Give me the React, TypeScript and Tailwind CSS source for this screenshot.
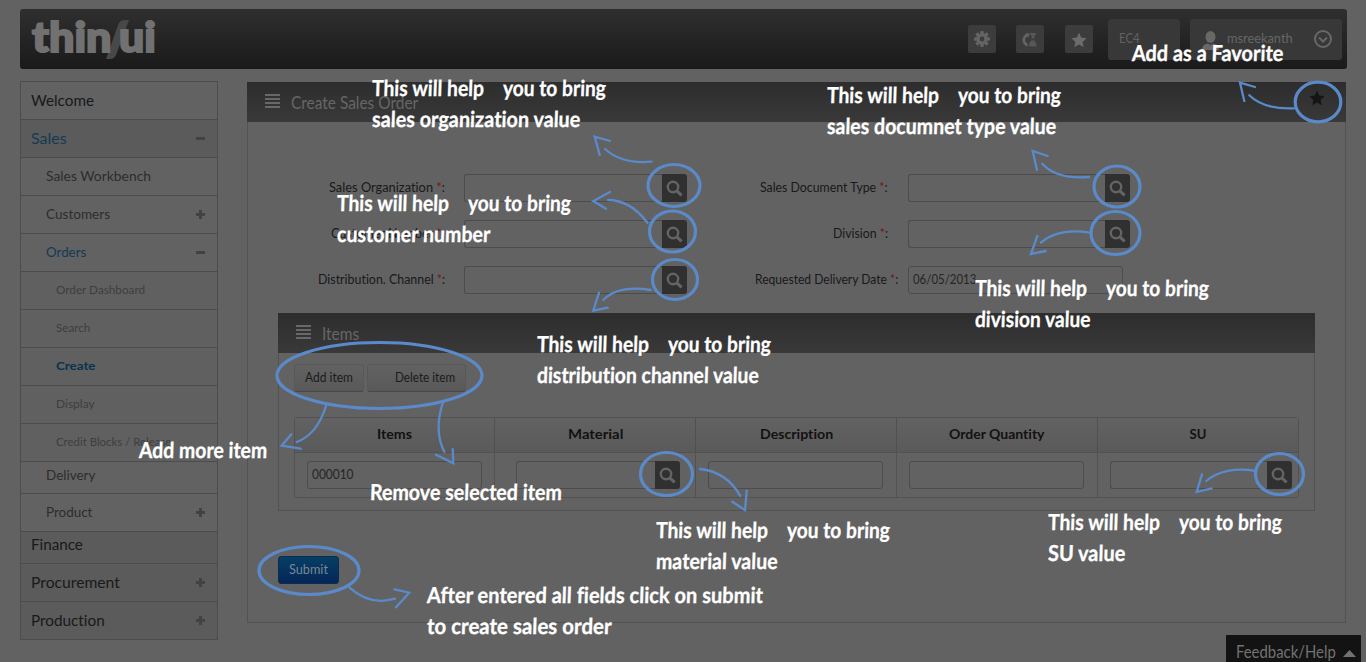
import { useLayoutEffect, useRef, useState } from "react";
import type { ReactNode } from "react";

/** Text condensed or widened horizontally to a given width. */
function Fit({ w, children, className = "" }: { w: number; children: ReactNode; className?: string }) {
  const ref = useRef<HTMLSpanElement>(null);
  const [scale, setScale] = useState(1);
  useLayoutEffect(() => {
    if (ref.current && ref.current.offsetWidth) setScale(w / ref.current.offsetWidth);
  }, [w]);
  return (
    <span className={`inline-block shrink-0 whitespace-pre ${className}`} style={{ width: w }}>
      <span ref={ref} className="inline-block origin-left" style={{ transform: `scaleX(${scale})` }}>
        {children}
      </span>
    </span>
  );
}

type NavRow = { label: string; w: number; level: 0 | 1 | 2; sign?: "+" | "-"; active?: boolean; short?: boolean; shade?: boolean };

const NAV: NavRow[] = [
  { label: "Welcome", w: 63, level: 0 },
  { label: "Sales", w: 36, level: 0, sign: "-", active: true, shade: true },
  { label: "Sales Workbench", w: 105, level: 1 },
  { label: "Customers", w: 64, level: 1, sign: "+" },
  { label: "Orders", w: 40, level: 1, sign: "-", active: true },
  { label: "Order Dashboard", w: 89, level: 2 },
  { label: "Search", w: 34, level: 2 },
  { label: "Create", w: 39, level: 2, active: true },
  { label: "Display", w: 39, level: 2 },
  { label: "Credit Blocks / Release", w: 115, level: 2 },
  { label: "Delivery", w: 49, level: 1, short: true },
  { label: "Product", w: 46, level: 1, sign: "+" },
  { label: "Finance", w: 52, level: 0, short: true, shade: true },
  { label: "Procurement", w: 89, level: 0, sign: "+", shade: true },
  { label: "Production", w: 74, level: 0, sign: "+", shade: true },
];

function NavItem({ row }: { row: NavRow }) {
  const size = ["pl-[10px] text-[15.5px]", "pl-[25px] text-[14px]", "pl-[35px] text-[12px]"][row.level];
  const idle = ["text-[#191919]", "text-[#2d2d2d]", "text-[#3e3e3e]"][row.level];
  const color = row.active ? (row.level === 2 ? "font-bold text-[#07334f]" : "text-[#143a55]") : idle;
  return (
    <li
      className={`flex items-center justify-between border-b border-[#4c4c4c] pr-3 ${size} ${color} ${
        row.short ? "h-8 pb-[6px]" : "h-[38px]"
      } ${row.shade ? "bg-[#5b5b5b]" : row.level === 2 ? "bg-[#606060]" : "bg-[#626262]"}`}
    >
      <Fit w={row.w} className={row.level === 0 || row.short ? "" : "mb-[2px]"}>{row.label}</Fit>
      {row.sign && (
        <svg width="9" height="9" viewBox="0 0 9 9" className="fill-[#424242]">
          <path d={row.sign === "+" ? "M3 0h3v3h3v3H6v3H3V6H0V3h3z" : "M0 3h9v3H0z"} />
        </svg>
      )}
    </li>
  );
}

function SearchButton() {
  return (
    <button className="flex h-7 w-[25px] shrink-0 items-center justify-center rounded-r-[3px] bg-[#303030]">
      <svg width="17" height="17" viewBox="0 0 17 17" fill="none" className="stroke-[#646464]">
        <circle cx="7" cy="7" r="5.2" strokeWidth="2.4" />
        <path d="M10.8 10.8L15.6 15.4" strokeWidth="3" />
      </svg>
    </button>
  );
}

function Field({ value, w = 0, className }: { value?: string; w?: number; className: string }) {
  return (
    <div className={`flex h-7 items-center rounded-[3px] border border-[#4c4c4c] bg-[#626262] pl-1 text-[12.5px] text-[#252525] ${className}`}>
      {value && <Fit w={w}>{value}</Fit>}
    </div>
  );
}

function Label({ text, w, className }: { text: string; w: number; className: string }) {
  return (
    <div className={`flex shrink-0 justify-end text-[12.5px] text-[#191919] ${className}`}>
      <Fit w={w}>
        {text} <span className="text-[#7a1414]">*</span>:
      </Fit>
    </div>
  );
}

function FormRow({ left, lw, right, rw, date }: { left: string; lw: number; right: string; rw: number; date?: string }) {
  return (
    <div className="flex h-7 items-center">
      <Label text={left} w={lw} className="w-[197px]" />
      <div className="ml-[19px] flex w-[224px]">
        <Field className="w-[198px] rounded-r-none border-r-0" />
        <SearchButton />
      </div>
      <Label text={right} w={rw} className={date ? "w-[210px]" : "w-[200px]"} />
      <div className={`flex ${date ? "ml-[10px]" : "ml-[20px]"}`}>
        {date ? (
          <Field className="w-[215px]" value={date} w={63} />
        ) : (
          <>
            <Field className="w-[197px] rounded-r-none border-r-0" />
            <SearchButton />
          </>
        )}
      </div>
    </div>
  );
}

function BarTitle({ title, w }: { title: string; w: number }) {
  return (
    <>
      <svg width="15" height="15" viewBox="0 0 15 15" className="mb-[2px] fill-[#686868]">
        <path d="M0 0h15v2H0zM0 4h15v2H0zM0 8h15v2H0zM0 12h15v2H0z" />
      </svg>
      <Fit w={w} className="mt-[2px] ml-[11px] text-[17.5px] text-[#666]">
        {title}
      </Fit>
    </>
  );
}

const STAR = "M8 0.6L10.2 5.6L15.6 6.2L11.6 9.9L12.7 15.3L8 12.6L3.3 15.3L4.4 9.9L0.4 6.2L5.8 5.6Z";

function TopBar() {
  return (
    <header className="flex h-[60px] items-center rounded-[3px] bg-linear-to-b from-[#2f2f2f] to-[#1a1a1a] pr-[5px]">
      <div className="relative ml-3 flex h-full w-[124px] text-[41px] leading-[56px] font-black text-[#717171] [-webkit-text-stroke:2px_#717171]">
        <svg width="124" height="60" viewBox="0 0 124 60" className="absolute inset-0">
          <path d="M74 50H79Q82 50 84 46L97 11H92Q88 11 86 16Z" fill="#484848" />
        </svg>
        <Fit w={80} className="relative">thin</Fit>
        <Fit w={37} className="relative ml-[7px]">ui</Fit>
      </div>
      <div className="ml-auto flex items-center">
        <div className="flex h-7 w-7 items-center justify-center rounded-[2px] bg-[#3c3c3c]">
          <svg width="16" height="16" viewBox="-8 -8 16 16" className="fill-[#646464]">
            {[0, 45, 90, 135].map((a) => (
              <rect key={a} x="-1.8" y="-8" width="3.6" height="16" rx="1" transform={`rotate(${a})`} />
            ))}
            <circle r="5.6" />
            <circle r="2.4" fill="#3c3c3c" />
          </svg>
        </div>
        <div className="ml-5 flex h-7 w-7 items-center justify-center rounded-[2px] bg-[#3c3c3c]">
          <svg width="16" height="16" viewBox="0 0 16 16" fill="none" className="mt-0.5">
            <path d="M5.5 3C0.5 5 0.5 11 5.500 13.5" stroke="#646464" strokeWidth="2.6" />
            <path d="M3 1.5L7.500 1.2L6.5 5.5Z" fill="#646464" />
            <path d="M8 1H14V3H12.500V6.500H9.500V3H8zM9 8.500H12.500L14.500 12V14.500H7V12z" fill="#575757" />
          </svg>
        </div>
        <div className="ml-[21px] flex h-7 w-7 items-center justify-center rounded-[2px] bg-[#3c3c3c]">
          <svg width="16" height="16" viewBox="0 0 16 16" className="mt-0.5 fill-[#6b6b6b]"><path d={STAR} /></svg>
        </div>
        <div className="ml-[15px] flex h-[41px] w-[72px] items-center rounded-[3px] bg-[#383838] pl-[11px] text-[13px] text-[#626262]">
          <Fit w={21}>EC4</Fit>
        </div>
        <div className="ml-[10px] flex h-[41px] w-[152px] items-center rounded-[3px] bg-[#383838] pl-3 text-[13px] text-[#666]">
          <svg width="17" height="19" viewBox="0 0 17 19" className="mt-[2px] fill-[#686868]">
            <ellipse cx="8.5" cy="6" rx="5" ry="6" />
            <path d="M0 19C0 14.5 3 13 6 12.5L8.5 14L11 12.5C14 13 17 14.5 17 19Z" />
          </svg>
          <Fit w={66} className="ml-2">msreekanth</Fit>
          <svg width="20" height="20" viewBox="0 0 20 20" fill="none" className="ml-5 stroke-[#686868] stroke-2">
            <circle cx="10" cy="10" r="8" />
            <path d="M6 8.5L10 12.5L14 8.5" />
          </svg>
        </div>
      </div>
    </header>
  );
}

const COLUMNS = [
  { name: "Items", w: 35, cell: "w-[200px]" },
  { name: "Material", w: 55, cell: "w-[201px]" },
  { name: "Description", w: 73, cell: "w-[201px]" },
  { name: "Order Quantity", w: 96, cell: "w-[201px]" },
  { name: "SU", w: 17, cell: "w-[200px]" },
];

function ItemsPanel() {
  return (
    <section className="mt-[19px] ml-[30px] h-[198px] w-[1037px] border border-t-0 border-[#525252]">
      <div className="-mx-px flex h-10 items-center bg-linear-to-b from-[#2d2d2d] to-[#393939] pl-[18px]">
        <BarTitle title="Items" w={37} />
      </div>
      <div className="mt-[11px] ml-[15px] flex gap-[3px] text-[12.5px] text-[#1b1b1b]">
        <button className="flex h-7 w-[70px] items-center justify-center rounded-[3px] border border-[#585858] border-b-[#484848] bg-linear-to-b from-[#626262] to-[#595959]">
          <Fit w={48}>Add item</Fit>
        </button>
        <button className="flex h-7 w-[99px] items-center justify-end rounded-[3px] border border-[#585858] border-b-[#484848] bg-linear-to-b from-[#626262] to-[#595959] pr-[10px]">
          <Fit w={60}>Delete item</Fit>
        </button>
      </div>
      <div className="mt-[25px] ml-[15px] h-[81px] w-[1005px] rounded-[3px] border border-[#525252]">
        <div className="flex h-[35px] border-b border-[#525252] bg-linear-to-b from-[#626262] to-[#5a5a5a]">
          {COLUMNS.map((c) => (
            <div key={c.name} className={`flex items-center justify-center border-r border-[#505050] text-[13px] font-bold text-[#121212] last:border-r-0 ${c.cell}`}>
              <Fit w={c.w}>{c.name}</Fit>
            </div>
          ))}
        </div>
        <div className="flex h-11">
          <div className="flex w-[200px] items-center border-r border-[#525252] pl-3">
            <Field className="w-[175px]" value="000010" w={42} />
          </div>
          <div className="flex w-[201px] items-center border-r border-[#525252] pl-[21px]">
            <Field className="w-[139px] rounded-r-none border-r-0" />
            <SearchButton />
          </div>
          <div className="flex w-[201px] items-center border-r border-[#525252] pl-3">
            <Field className="w-[175px]" />
          </div>
          <div className="flex w-[201px] items-center border-r border-[#525252] pl-3">
            <Field className="w-[175px]" />
          </div>
          <div className="flex w-[200px] items-center pl-3">
            <Field className="w-[157px] rounded-r-none border-r-0" />
            <SearchButton />
          </div>
        </div>
      </div>
    </section>
  );
}

const ELLIPSES = [
  [674, 185.5, 26, 21],
  [672.5, 231.5, 23, 20.5],
  [675, 279.5, 22.5, 20],
  [1117, 186.5, 23, 20.5],
  [1115.5, 233, 24.5, 21.5],
  [1318, 102, 22.8, 19.8],
  [379.5, 375.5, 102.5, 33],
  [666.5, 474, 26, 21.5],
  [1279.5, 474, 24, 20.5],
  [309, 570.5, 50, 24],
];

const ARROWS = [
  "M651.5 161.7C632 163.5 616 159 605 149M610 141L594.7 136.7L599.7 155",
  "M647.5 222.7C637 209 625 200 608 200M610 192L593.3 201L606 208.7",
  "M650.7 290C632 287 614 289 603.3 300M599 292.7L593.3 310.7L607.7 307.7",
  "M1089 177C1070 178.5 1053 175.5 1042.3 163.7M1047.7 156L1032.7 151L1037 170",
  "M1090 232.7C1070 229.5 1053 232 1041 242.7M1037.3 236L1031 254L1045.7 251",
  "M1294 108.3C1277 109 1260 106 1249.3 95.3M1255 87L1240 82.7L1244.3 101",
  "M326 406C321 422 313 436 296.7 442M291.3 434.3L281.7 445.7L300.7 448.7",
  "M442.7 403.3C437 420 437 438 444.3 451.7M452.7 449L453.3 463.3L436 454.7",
  "M700 469C718 471 732 481 740.3 496M746.7 490.7L745 510L732.3 501.7",
  "M1254 470.7C1236 467.5 1218 471 1206.3 481M1202 474.3L1196.7 492L1211.7 488.3",
  "M349.3 587.3C361 598 377 604 395 598.7M394.3 589.3L409.3 592.7L396 607.3",
];

type Note = { x: number; y: number; text: string; w: number; help?: boolean };

const NOTES: Note[] = [
  { x: 372, y: 96, text: "sales organization value", w: 208, help: true },
  { x: 337, y: 211, text: "customer number", w: 153, help: true },
  { x: 827, y: 103, text: "sales documnet type value", w: 229, help: true },
  { x: 975, y: 296, text: "division value", w: 116, help: true },
  { x: 537, y: 352, text: "distribution channel value", w: 222, help: true },
  { x: 656, y: 538, text: "material value", w: 122, help: true },
  { x: 1048, y: 530, text: "SU value", w: 77, help: true },
  { x: 1132, y: 61, text: "Add as a Favorite", w: 151 },
  { x: 139, y: 458, text: "Add more item", w: 128 },
  { x: 370, y: 500, text: "Remove selected item", w: 192 },
  { x: 427, y: 603, text: "After entered all fields click on submit", w: 336 },
  { x: 427, y: 634, text: "to create sales order", w: 185 },
];

function Annotations() {
  return (
    <div className="pointer-events-none absolute inset-0">
      <svg width="1366" height="662" viewBox="0 0 1366 662" fill="none" className="absolute inset-0 stroke-[#5b8acb]">
        {ELLIPSES.map(([cx, cy, rx, ry]) => (
          <ellipse key={`${cx}-${cy}`} cx={cx} cy={cy} rx={rx} ry={ry} strokeWidth="3.2" />
        ))}
        {ARROWS.map((d) => (
          <path key={d} d={d} strokeWidth="2.3" strokeLinecap="round" />
        ))}
      </svg>
      {NOTES.map((n) => (
        <div
          key={n.text}
          className="absolute text-[22px] leading-[31px] font-bold text-white [-webkit-text-stroke:0.3px_white]"
          style={{ left: n.x, top: n.y - 24 }}
        >
          {n.help && (
            <div className="flex -skew-x-2">
              <Fit w={112}>This will help</Fit>
              <Fit w={103} className="ml-[19px]">you to bring</Fit>
            </div>
          )}
          <div className="flex -skew-x-2">
            <Fit w={n.w}>{n.text}</Fit>
          </div>
        </div>
      ))}
    </div>
  );
}

export default function App() {
  return (
    <div className="relative h-[662px] w-[1366px] overflow-hidden bg-[#626262] pt-[9px] pr-[19px] pl-5 font-['Lato','Open_Sans',sans-serif] [font-variant-ligatures:none]">
      <TopBar />
      <div className="mt-3 flex items-start">
        <ul className="w-[198px] border border-b-0 border-[#4c4c4c]">
          {NAV.map((row) => (
            <NavItem key={row.label} row={row} />
          ))}
        </ul>
        <main className="mt-px ml-[29px] h-[541px] w-[1099px] border border-t-0 border-[#525252]">
          <div className="-mx-px flex h-10 items-center bg-linear-to-b from-[#2d2d2d] to-[#393939] pr-[21px] pl-[18px]">
            <BarTitle title="Create Sales Order" w={127} />
            <svg width="16" height="16" viewBox="0 0 16 16" className="mb-2 ml-auto fill-[#151515]"><path d={STAR} /></svg>
          </div>
          <div className="mt-[52px] flex flex-col gap-[18px]">
            <FormRow left="Sales Organization" lw={116} right="Sales Document Type" rw={128} />
            <FormRow left="Customer Number" lw={114} right="Division" rw={55} />
            <FormRow left="Distribution. Channel" lw={127} right="Requested Delivery Date" rw={143} date="06/05/2013" />
          </div>
          <ItemsPanel />
          <button className="mt-[45px] ml-[30px] flex h-7 w-[61px] items-center justify-center rounded-[3px] border border-[#0b2c50] bg-linear-to-b from-[#063f66] to-[#052657] text-[13px] text-[#7c8790]">
            <Fit w={39}>Submit</Fit>
          </button>
        </main>
      </div>
      <div className="absolute top-[635px] left-[1226px] flex h-[35px] w-[135px] items-center bg-[#131313] pl-[10px] text-[18px] text-[#727272]">
        <Fit w={100} className="mb-[2px]">Feedback/Help</Fit>
        <svg width="13" height="7" viewBox="0 0 13 7" className="mt-[2px] ml-[7px] fill-[#727272]">
          <path d="M6.5 0L13 7H0z" />
        </svg>
      </div>
      <Annotations />
    </div>
  );
}
